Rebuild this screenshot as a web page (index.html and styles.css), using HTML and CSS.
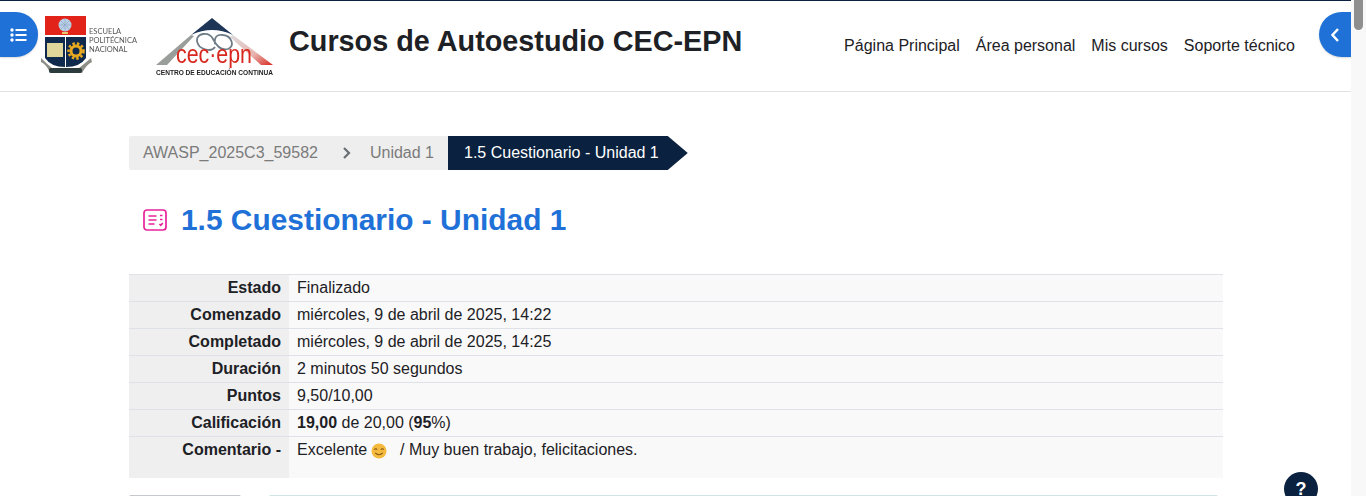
FILE: index.html
```html
<!DOCTYPE html>
<html lang="es">
<head>
<meta charset="utf-8">
<title>1.5 Cuestionario - Unidad 1</title>
<link rel="stylesheet" href="styles.css">
</head>
<body>
<div class="viewport">
<div class="page">
  <header class="topbar">
    <div class="logos">
      <svg class="logo-epn" width="98" height="62" viewBox="0 0 98 62">
        <rect x="5" y="1" width="41" height="19" fill="#e2231a"/>
        <circle cx="25" cy="10" r="6.500" fill="#b9cfe6"/>
        <path d="M19 10h12M25 4v12M21 6l8 8M29 6l-8 8" stroke="#8ea8c6" stroke-width=".7"/>
        <path d="M22 17h6v2h-6z" fill="#e7c56a"/>
        <path d="M5 22h20v30q-14 0-20-9zM26 22h20v21q-6 9-20 9z" fill="#0f2a4d"/>
        <rect x="7" y="28" width="16" height="14" fill="#e0d59a"/>
        <circle cx="36" cy="36" r="5" fill="none" stroke="#e8a91f" stroke-width="3"/>
        <circle cx="36" cy="36" r="7.500" fill="none" stroke="#e8a91f" stroke-width="2.500" stroke-dasharray="2.500 2"/>
        <path d="M1 43q6 6 11 10h27q5-4 12-10l1 4q-6 3-10 11H10Q7 50 1 47z" fill="#8d8f86"/>
        <rect x="9" y="53" width="33" height="5" rx="2" fill="#2c3b3d"/>
        <text class="epn-text" x="49" y="19">ESCUELA</text>
        <text class="epn-text" x="49" y="28">POLITÉCNICA</text>
        <text class="epn-text" x="49" y="37">NACIONAL</text>
      </svg>
      <svg class="logo-cec" width="120" height="60" viewBox="0 0 120 60">
        <defs>
          <linearGradient id="edge" x1="0" y1="0" x2="1" y2="1">
            <stop offset="0" stop-color="#dcdcdc"/>
            <stop offset=".6" stop-color="#e8b5b0"/>
            <stop offset="1" stop-color="#d8281f"/>
          </linearGradient>
        </defs>
        <path d="M57 1 36 18Q57 8 78 18z" fill="#1d3557"/>
        <path d="M1 48 36 18l3 1L12 48z" fill="#9a9e9a"/>
        <path d="M78 18 118 48h-12L75 20z" fill="url(#edge)"/>
        <path d="M60 30C56 36 43 32 42 24 41 16 54 14 58 22 61 28 66 34 73 32 80 29 77 19 68 18 62 17 59 20 60 27" fill="none" stroke="#6f7c86" stroke-width="1.800"/>
        <text class="cec-brand" x="21" y="46" textLength="76" lengthAdjust="spacingAndGlyphs">cec·epn</text>
        <text class="cec-sub" x="1" y="58" textLength="117" lengthAdjust="spacingAndGlyphs">CENTRO DE EDUCACIÓN CONTINUA</text>
      </svg>
    </div>
    <h2 class="site-title">Cursos de Autoestudio CEC-EPN</h2>
    <nav class="main-nav">
      <a href="#">Página Principal</a>
      <a href="#">Área personal</a>
      <a href="#">Mis cursos</a>
      <a href="#">Soporte técnico</a>
    </nav>
  </header>
  <main class="content">
    <ol class="crumbs">
      <li class="crumb crumb-course"><span>AWASP_2025C3_59582</span>
        <svg class="crumb-sep" width="10" height="14" viewBox="0 0 10 14"><path d="M3 2 8 7 3 12" fill="none" stroke="#6a6f74" stroke-width="2.200"/></svg>
      </li>
      <li class="crumb crumb-unit">Unidad 1</li>
      <li class="crumb-current">1.5 Cuestionario - Unidad 1</li>
    </ol>
    <div class="heading">
      <svg class="quiz-icon" width="24" height="24" viewBox="0 0 24 24" fill="none" stroke="#e7239a" stroke-width="1.700">
        <rect x="1" y="2" width="22" height="20" rx="3"/>
        <path d="M5.500 8h8M5.500 12h8M5.500 16h6M17 7.500h2.500M17 11.500h2.500M16.500 16l1.300 1.300 2-2.300"/>
      </svg>
      <h1 class="page-title">1.5 Cuestionario - Unidad 1</h1>
    </div>
    <table class="summary">
      <tbody>
        <tr><th>Estado</th><td>Finalizado</td></tr>
        <tr><th>Comenzado</th><td>miércoles, 9 de abril de 2025, 14:22</td></tr>
        <tr><th>Completado</th><td>miércoles, 9 de abril de 2025, 14:25</td></tr>
        <tr><th>Duración</th><td>2 minutos 50 segundos</td></tr>
        <tr><th>Puntos</th><td>9,50/10,00</td></tr>
        <tr><th>Calificación</th><td><b>19,00</b> de 20,00 (<b>95</b>%)</td></tr>
        <tr class="row-feedback"><th>Comentario -</th><td>Excelente <svg class="smile" width="16" height="16" viewBox="0 0 17 17"><circle cx="8.500" cy="8.500" r="8" fill="#f5b93e"/><path d="M3.500 7q1.500-2 3 0M10.500 7q1.500-2 3 0M4.500 10.500q4 4 8 0" fill="none" stroke="#7a5312" stroke-width="1.100"/></svg> &nbsp; / Muy buen trabajo, felicitaciones.</td></tr>
      </tbody>
    </table>
    <div class="next-row">
      <div class="next-left"></div>
      <div class="next-right"></div>
    </div>
  </main>
</div>
<button class="drawer-toggle drawer-left" aria-label="Menú">
  <svg width="17" height="14" viewBox="0 0 17 14" fill="#fff"><circle cx="2" cy="2" r="1.700"/><circle cx="2" cy="7" r="1.700"/><circle cx="2" cy="12" r="1.700"/><rect x="5.500" y="1" width="11" height="2"/><rect x="5.500" y="6" width="11" height="2"/><rect x="5.500" y="11" width="11" height="2"/></svg>
</button>
<button class="drawer-toggle drawer-right" aria-label="Cerrar">
  <svg width="10" height="16" viewBox="0 0 10 16"><path d="M8 2 2.500 8 8 14" fill="none" stroke="#fff" stroke-width="2.500"/></svg>
</button>
<button class="help">?</button>
<div class="scrollbar"><div class="scrollthumb"></div></div>
</div>
</body>
</html>
```
FILE: styles.css
```css
html, body {
  margin: 0;
  height: 100%;
  overflow: hidden;
  background: #fff;
}
body {
  font-family: "Liberation Sans", Arial, sans-serif;
  font-size: 16px;
  color: #1d2125;
}
.viewport {
  position: relative;
  width: 1366px;
  height: 496px;
  overflow: hidden;
}
.page {
  width: 1351px;
  height: 496px;
  overflow: hidden;
}
.topbar {
  box-sizing: border-box;
  height: 92px;
  border-top: 1px solid #0a2240;
  border-bottom: 1px solid #e2e2e2;
  display: flex;
  align-items: flex-start;
  position: relative;
}
.logos {
  display: flex;
  align-items: flex-start;
  padding-left: 40px;
  width: 249px;
  flex: none;
}
.logo-epn { margin-top: 14px; flex: none; filter: blur(.3px); }
.logo-cec { margin-top: 16px; margin-left: 17px; flex: none; filter: blur(.3px); }
.epn-text { font-family: "Lato", sans-serif; font-size: 7.500px; fill: #555; }
.cec-brand { font-size: 25px; fill: #d8281f; }
.cec-sub { font-size: 6.500px; font-weight: 700; fill: #222; }
.site-title {
  margin: 23px 0 0;
  font-size: 28.800px;
  line-height: 34px;
  font-weight: 700;
  color: #1d2125;
  flex: none;
}
.main-nav {
  margin-left: auto;
  margin-right: 56px;
  margin-top: 35px;
  display: flex;
  gap: 16px;
  line-height: 19px;
}
.main-nav a {
  color: #1d2125;
  text-decoration: none;
}
.content {
  padding: 44px 128px 0 129px;
}
.crumbs {
  list-style: none;
  margin: 0;
  padding: 0;
  display: flex;
  height: 34px;
  align-items: stretch;
}
.crumb {
  display: flex;
  align-items: center;
  background: #eee;
  color: #7b7b7b;
}
.crumb-course {
  padding-left: 14px;
  gap: 23px;
  border-radius: 2px 0 0 2px;
}
.crumb-sep { margin-right: 19px; }
.crumb-unit { padding-right: 14px; }
.crumb-current {
  display: flex;
  align-items: center;
  background: #0a2240;
  color: #fff;
  padding: 0 29px 0 16px;
  clip-path: polygon(0 0, calc(100% - 20px) 0, 100% 50%, calc(100% - 20px) 100%, 0 100%);
}
.heading {
  display: flex;
  align-items: center;
  margin-top: 32px;
  padding-left: 14px;
  gap: 14px;
  height: 36px;
}
.quiz-icon { flex: none; }
.page-title {
  margin: 0;
  font-size: 29.900px;
  line-height: 36px;
  font-weight: 700;
  color: #1f71d8;
}
.summary {
  margin-top: 36px;
  width: 1094px;
  border-collapse: collapse;
  table-layout: fixed;
}
.summary th, .summary td {
  border-top: 1px solid #dee2e6;
  padding: 3px 8px;
  line-height: 20px;
  height: 20px;
  vertical-align: top;
}
.summary th {
  width: 144px;
  text-align: right;
  background: #efefef;
  font-weight: 700;
}
.summary td {
  background: #f9f9f9;
  text-align: left;
}
.row-feedback th, .row-feedback td { height: 35px; }
.smile { vertical-align: -4px; margin-left: -1px; }
.next-row {
  display: flex;
  gap: 28px;
  margin-top: 17px;
}
.next-left {
  width: 112px;
  height: 8px;
  border-radius: 2px 2px 0 0;
  border-top: 1px solid #c4c7cc;
}
.next-right {
  width: 949px;
  height: 8px;
  border-radius: 2px 2px 0 0;
  border-top: 1px solid #cfe5e3;
}
.drawer-toggle {
  position: absolute;
  top: 12px;
  width: 38px;
  height: 45px;
  border: 0;
  padding: 0;
  background: #1f71d8;
  display: flex;
  align-items: center;
  justify-content: center;
}
.drawer-left {
  left: 0;
  border-radius: 0 22px 22px 0;
  box-shadow: 0 1px 2px rgba(0,0,0,.15);
}
.drawer-left svg { margin-left: -1px; }
.drawer-right {
  left: 1319px;
  width: 32px;
  border-radius: 23px 0 0 23px;
  box-shadow: 0 1px 2px rgba(0,0,0,.15);
}
.help {
  position: absolute;
  left: 1284px;
  top: 472px;
  width: 34px;
  height: 34px;
  border: 0;
  border-radius: 50%;
  padding: 0;
  background: #0a2240;
  color: #fff;
  font: 700 18px "Liberation Sans", Arial, sans-serif;
}
.scrollbar {
  position: absolute;
  left: 1351px;
  top: 0;
  width: 15px;
  height: 496px;
  background: #f8f8f8;
}
.scrollthumb {
  width: 9px;
  margin-left: 3px;
  height: 30px;
  border-radius: 0 0 5px 5px;
  background: #8f8f8f;
}
```
